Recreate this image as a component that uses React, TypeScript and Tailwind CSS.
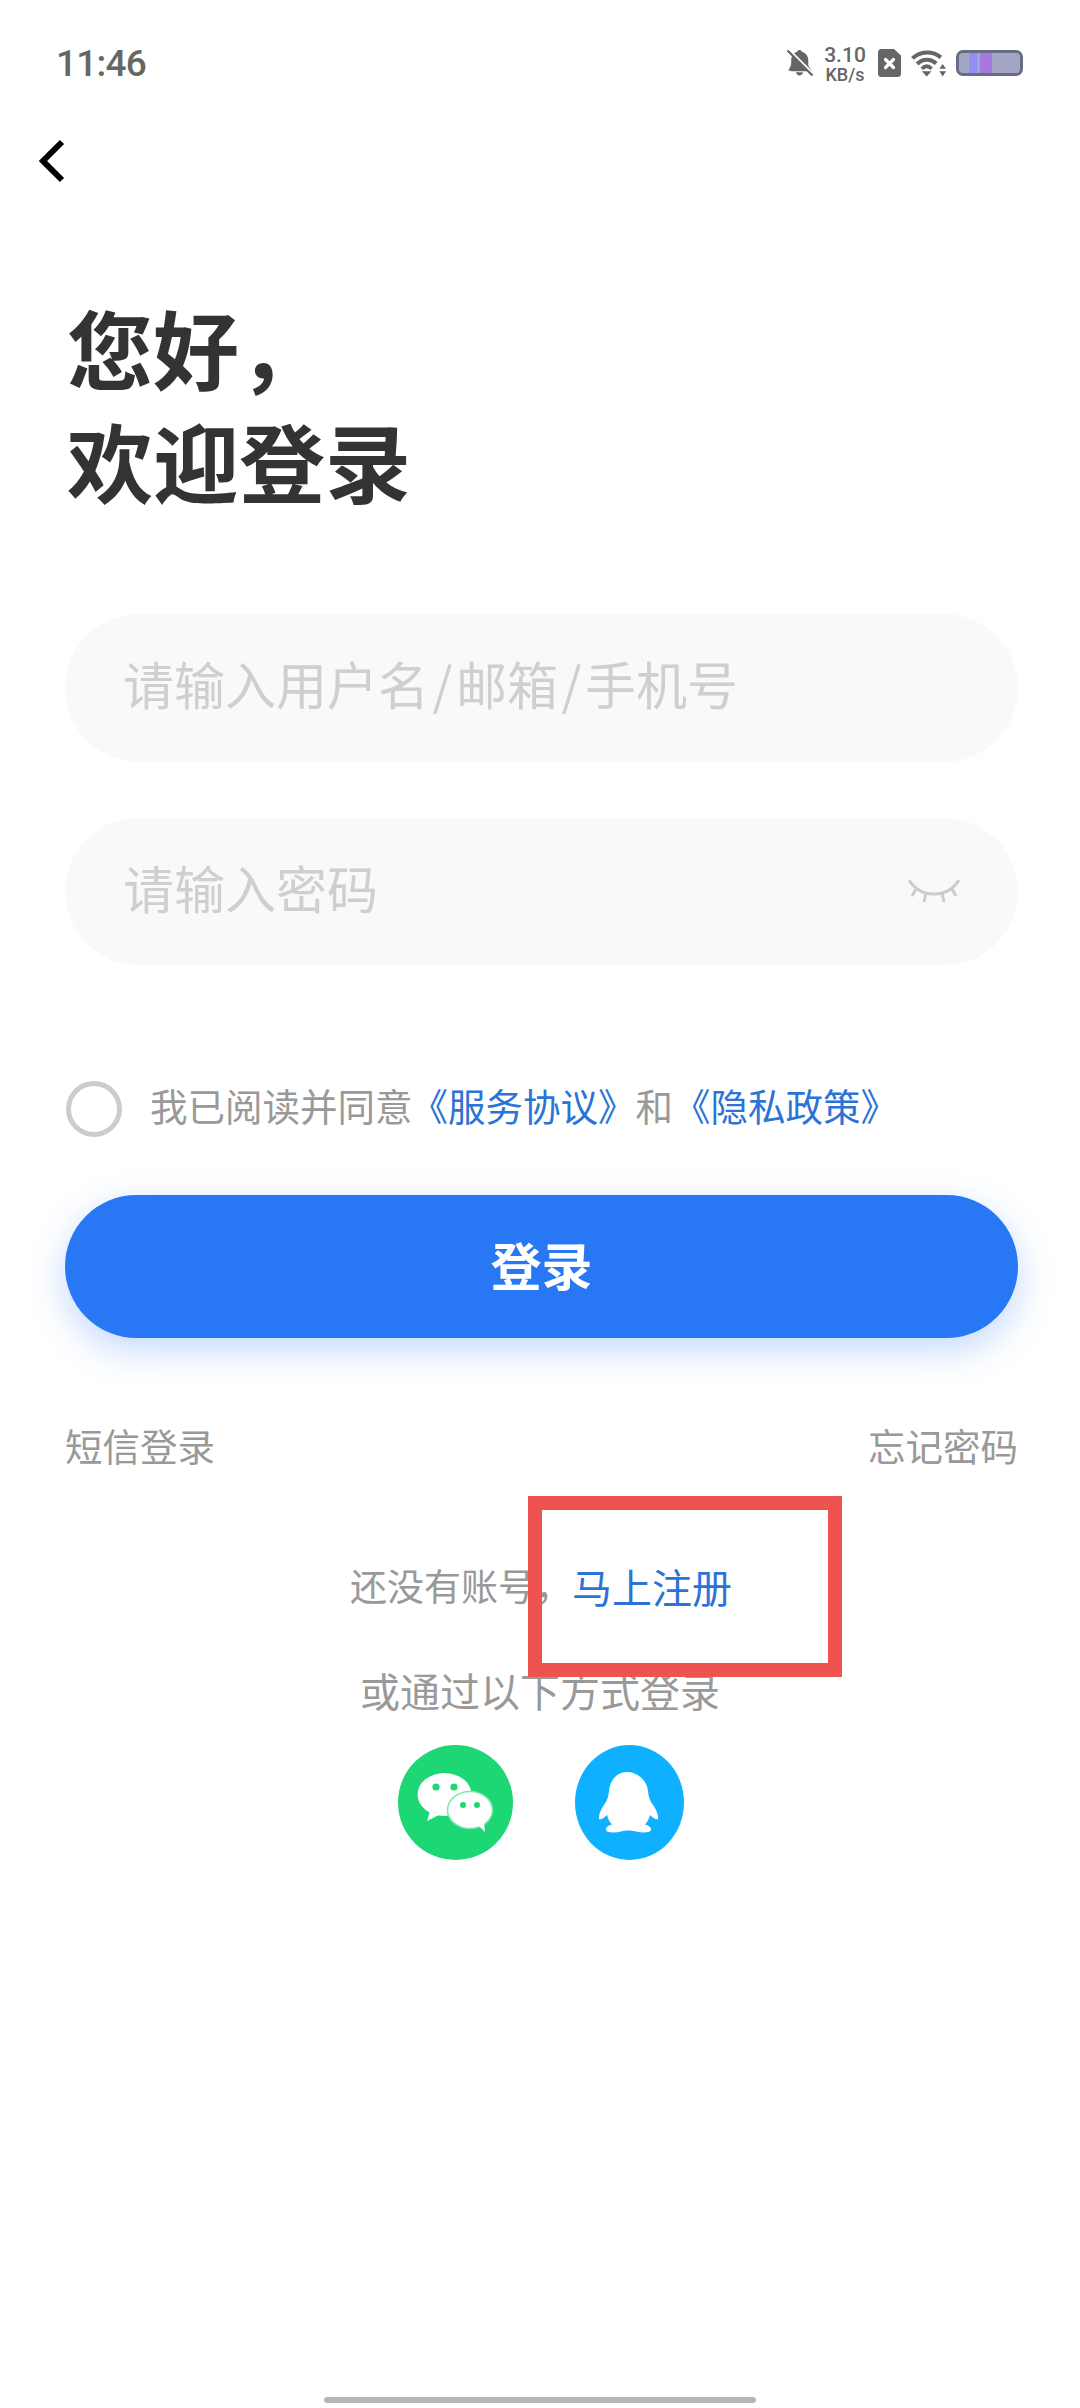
import React from "react";

const cjk = "font-['Noto_Sans_CJK_SC','Noto_Sans',sans-serif]";

function BellOff() {
  return (
    <svg width="28" height="28" viewBox="0 0 26 27">
      <path d="M12.500 1c1.400 0 2 .8 2.300 1.700C18.800 3.800 21 7 21 11v5l3.500 5.500H5L1.500 20.500C3.500 18 4.500 16 4.500 13V11c0-4 2.500-7.400 5.700-8.300C10.500 1.800 11.200 1 12.500 1z" fill="#666" />
      <path d="M9 22.500h7c-.5 2-1.800 3-3.500 3s-3-1-3.500-3z" fill="#666" />
      <path d="M2 0.500l24 24" stroke="#fff" strokeWidth="2.500" />
      <path d="M1 1.500l24 24" stroke="#666" strokeWidth="2.200" />
    </svg>
  );
}

function Sim() {
  return (
    <svg width="23" height="28" viewBox="0 0 23 28">
      <path d="M3.500 0H16l7 6.500V24.500a3.500 3.500 0 0 1-3.500 3.500h-16A3.500 3.500 0 0 1 0 24.500v-21A3.500 3.500 0 0 1 3.500 0z" fill="#666" />
      <path d="M7.500 10.500l8 8M15.500 10.500l-8 8" stroke="#fff" strokeWidth="3.200" strokeLinecap="round" />
    </svg>
  );
}

function Wifi() {
  return (
    <svg width="35" height="28" viewBox="0 0 34 27" fill="none">
      <path d="M1.500 9C9 1.500 21 1.500 29 8" stroke="#666" strokeWidth="4" />
      <path d="M6 14.500C11.500 9 19 9 24.500 14" stroke="#666" strokeWidth="4" />
      <path d="M10.500 19C13.500 16 17 16 20 19" stroke="#666" strokeWidth="3.500" />
      <path d="M10.500 21.500h9.500L15.200 26.500z" fill="#666" />
      <path d="M27.500 19h6.500l-3.200-4.500zM27.500 21.500h6.500l-3.200 5z" fill="#666" />
    </svg>
  );
}

function Battery() {
  return (
    <div className="flex h-[26px] w-[67px] overflow-hidden rounded-[7px] border-[3px] border-[#666e87] bg-[#a3a7c5] pl-[10px]">
      <div className="h-full w-[8px] bg-[#8f90ef]" />
      <div className="ml-[3px] h-full w-[12px] bg-[#a57ade]" />
    </div>
  );
}

function EyeClosed() {
  return (
    <svg width="52" height="26" viewBox="0 0 52 26" fill="none" stroke="#cccccc" strokeWidth="3">
      <path d="M1 1C8 12 18 15 26 15S44 12 51 1" />
      <path d="M8 10l-4 7M18 14l-2 9M34 14l2 9M44 10l4 7" />
    </svg>
  );
}

function WeChat() {
  return (
    <svg width="115" height="115" viewBox="0 0 115 115" className="shrink-0">
      <circle cx="57.500" cy="57.500" r="57.500" fill="#1dd674" />
      <ellipse cx="46.500" cy="49.500" rx="27" ry="21.500" fill="#fff" />
      <path d="M32 66l-3 10 12-6z" fill="#fff" />
      <circle cx="38" cy="42" r="3.600" fill="#1dd674" />
      <circle cx="56" cy="42" r="3.600" fill="#1dd674" />
      <ellipse cx="72" cy="65" rx="22.500" ry="18.500" fill="#fff" stroke="#7fe5ab" strokeWidth="1.500" />
      <path d="M80 80l7 7-1-11z" fill="#fff" />
      <circle cx="65" cy="60" r="3" fill="#1dd674" />
      <circle cx="79" cy="60" r="3" fill="#1dd674" />
    </svg>
  );
}

function QQ() {
  return (
    <svg width="109" height="115" viewBox="0 0 109 115" className="shrink-0">
      <ellipse cx="54.500" cy="57.500" rx="54.500" ry="57.500" fill="#0fb0ff" />
      <path
        d="M52 27C42 27 35 35 34 46C33.500 52 32 56 29 60C25.500 65 23.500 70 24 74C26 75 29 73 32 70C33 74 34.500 77 37 79.500C33 80.500 30.500 82.500 31 85C32 88 40 88 46 86.500C49 85.800 51 85.500 53.500 85.500C56 85.500 58 85.800 61 86.500C67 88 75 88 76 85C76.500 82.500 74 80.500 70 79.500C72.500 77 74 74 75 70C78 73 81 75 83 74C83.500 70 81.500 65 78 60C75 56 73.500 52 73 46C72 35 62 27 52 27Z"
        fill="#fff"
      />
    </svg>
  );
}

export default function App() {
  return (
    <div className={`${cjk} relative flex h-[2408px] w-[1080px] flex-col overflow-hidden bg-white`}>
      <div className="flex h-[126px] items-center justify-between pl-[56px] pr-[57px]">
        <span className="pt-[2px] font-['Roboto',sans-serif] text-[37px] font-medium tracking-[-0.8px] text-[#666]">11:46</span>
        <div className="flex items-center">
          <BellOff />
          <div className="ml-[9px] flex w-[44px] flex-col items-center font-['Roboto',sans-serif] font-medium text-[#666]">
            <span className="text-[21px] leading-[22px]">3.10</span>
            <span className="text-[18px] leading-[17px]">KB/s</span>
          </div>
          <div className="ml-[11px]"><Sim /></div>
          <div className="ml-[10px]"><Wifi /></div>
          <div className="ml-[10px]"><Battery /></div>
        </div>
      </div>

      <div className="flex h-[70px] items-center pl-[38px]">
        <svg width="28" height="44" viewBox="0 0 28 44" fill="none" stroke="#000" strokeWidth="6">
          <path d="M24 3L5 22l19 19" />
        </svg>
      </div>

      <h1 className="ml-[67px] mt-[94px] mb-[4px] text-[86px] font-bold leading-[113px] text-[#333]">
        您好，
        <br />
        欢迎登录
      </h1>

      <div className="ml-[65px] mt-[94px] flex h-[148px] w-[953px] items-center rounded-full bg-[#f9f9f9] pb-[9px] pl-[58px] text-[51px] text-[#cfcfcf]">
        请输入用户名<span className="px-[3.500px]">/</span>邮箱<span className="px-[3.500px]">/</span>手机号
      </div>
      <div className="ml-[65px] mt-[56px] flex h-[147px] w-[953px] items-center justify-between rounded-full bg-[#f9f9f9] pl-[58px] pr-[58px] text-[51px] text-[#cfcfcf]">
        <span className="pb-[8px]">请输入密码</span>
        <EyeClosed />
      </div>

      <div className="ml-[66px] mt-[116px] flex h-[56px] items-center text-[37.500px] text-[#999]">
        <div className="mr-[28px] h-[56px] w-[56px] shrink-0 rounded-full border-[5px] border-[#cccccc]" />
        <span className="pb-[8px]">我已阅读并同意</span>
        <span className="ml-[-2px] pb-[8px] text-[#2b73d6]">《服务协议》</span>
        <span className="pb-[8px]">和</span>
        <span className="pb-[8px] text-[#2b73d6]">《隐私政策》</span>
      </div>

      <button className="ml-[65px] mt-[58px] flex h-[143px] w-[953px] items-center justify-center rounded-full bg-[#2878f6] pb-[5px] text-[51px] font-bold text-white shadow-[0_12px_36px_rgba(40,120,246,0.28)]">
        登录
      </button>

      <div className="ml-[65px] mt-[82px] mb-[3px] flex h-[50px] w-[953px] items-center justify-between text-[37.500px] text-[#999]">
        <span>短信登录</span>
        <span>忘记密码</span>
      </div>

      <div className="mt-[88px] mb-[1px] flex h-[50px] items-center justify-center pl-[2px] text-[37px] text-[#999]">
        还没有账号，
        <span className="text-[40px] text-[#2b73d6]">马上注册</span>
      </div>

      <div className="mt-[53px] mb-[3px] flex h-[50px] items-center justify-center text-[40px] text-[#999]">或通过以下方式登录</div>

      <div className="ml-[398px] mt-[27px] flex gap-[62px]">
        <WeChat />
        <QQ />
      </div>

      <div className="mb-[5px] ml-[324px] mt-auto h-[6px] w-[432px] rounded-full bg-[#b5b5b5]" />

      <div className="absolute left-[528px] top-[1496px] h-[181px] w-[314px] border-[14px] border-[#ef5350]" />
    </div>
  );
}
